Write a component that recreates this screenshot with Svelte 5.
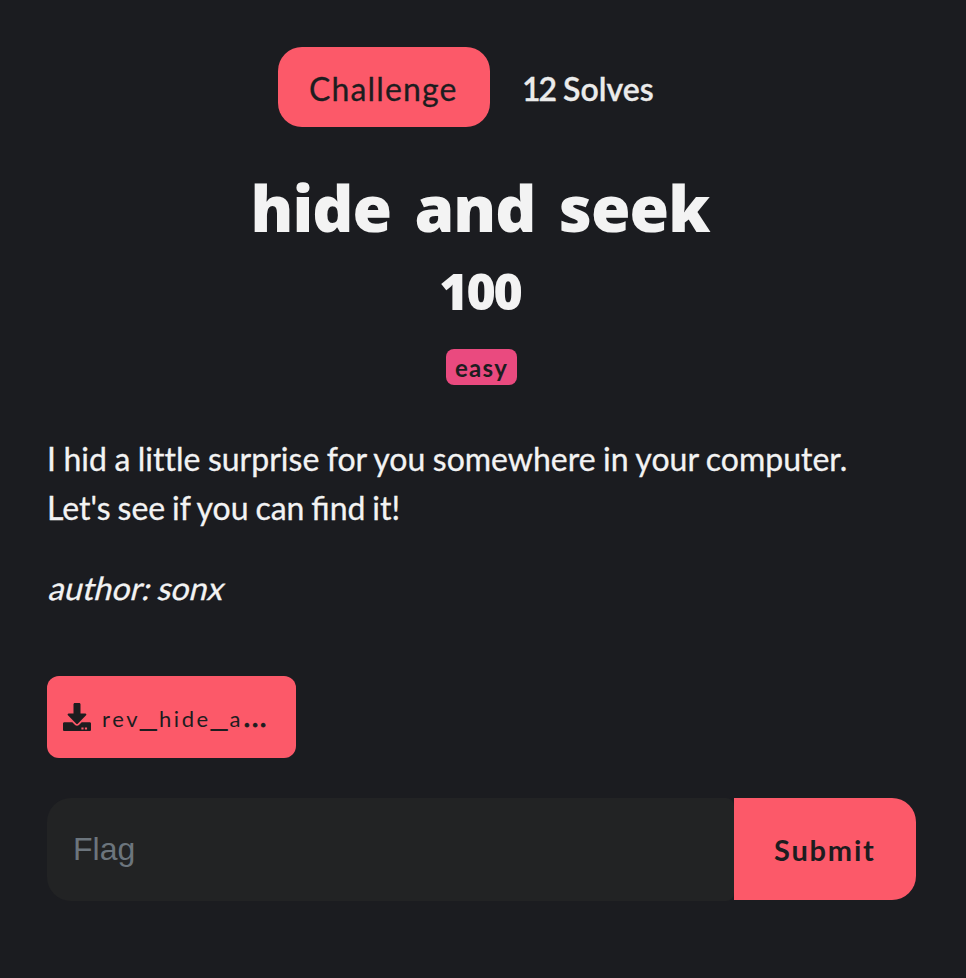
<script>
  let flag = $state('');
</script>

<main>
  <nav>
    <button class="tab active"><span>Challenge</span></button>
    <button class="tab solves"><span class="count">12</span> <span>Solves</span></button>
  </nav>

  <h2>hide and seek</h2>
  <h3>100</h3>
  <div class="tags"><span class="tag">easy</span></div>

  <section class="description">
    <p><span class="lead">I hid a <span class="plain">little</span> surprise for you somewhere in your computer.</span><br />Let's see if you can find it!</p>
    <p class="author"><span>author: sonx</span></p>
  </section>

  <button class="file">
    <svg viewBox="0 0 512 512" aria-hidden="true">
      <path fill-rule="evenodd" d="M216 0h80c13.3 0 24 10.7 24 24v168h87.7c17.8 0 26.7 21.5 14.1 34.1L269.7 378.3c-7.5 7.5-19.8 7.5-27.3 0L90.1 226.1c-12.6-12.6-3.7-34.1 14.1-34.1H192V24c0-13.3 10.7-24 24-24zm296 376v112c0 13.3-10.7 24-24 24H24c-13.3 0-24-10.7-24-24V376c0-13.3 10.7-24 24-24h146.7l49 49c20.1 20.1 52.5 20.1 72.6 0l49-49H488c13.3 0 24 10.7 24 24zM336 448v36h40v-36zm64 0v36h40v-36z" />
    </svg>
    <span class="name">rev<i>_</i>hide<i>_</i>a<b>...</b></span>
  </button>

  <form onsubmit={(e) => e.preventDefault()}>
    <input placeholder="Flag" bind:value={flag} />
    <button class="submit">Submit</button>
  </form>
</main>

<style>
  :global(body) {
    background: #1b1c20;
  }
  main {
    box-sizing: border-box;
    width: 966px;
    height: 978px;
    padding: 47px 50px 0 47px;
    overflow: hidden;
    background: #1b1c20;
    color: #f3f3f3;
    font-family: Lato, sans-serif;
    display: flex;
    flex-direction: column;
  }
  button {
    border: 0;
    padding: 0;
    margin: 0;
    font-family: Lato, sans-serif;
    color: #1d1d1f;
    background: #fc5969;
    white-space: nowrap;
    text-align: left;
  }
  nav {
    display: flex;
    height: 80px;
    padding-left: 231px;
  }
  .tab {
    box-sizing: border-box;
    height: 80px;
    padding-top: 3px;
    font-size: 32px;
    line-height: 75px;
  }
  .active {
    width: 212px;
    padding-left: 31px;
    border-radius: 24px;
    letter-spacing: 1.15px;
    -webkit-text-stroke: 0.3px #1d1d1f;
  }
  .solves {
    padding-left: 32px;
    background: none;
    color: #ebebeb;
    font-weight: 600;
    -webkit-text-stroke: 0.3px #ebebeb;
  }
  .count {
    letter-spacing: -2px;
  }
  h2,
  h3 {
    margin: 0;
    text-align: center;
    white-space: nowrap;
    font-family: 'Open Sans', sans-serif;
    font-weight: 800;
  }
  h2 {
    margin-top: 42px;
    padding-right: 3px;
    font-size: 64px;
    line-height: 77px;
    letter-spacing: -0.9px;
    word-spacing: 7.4px;
  }
  h3 {
    margin-top: 15px;
    padding-right: 3px;
    font-size: 50px;
    line-height: 60px;
    letter-spacing: -2.2px;
  }
  .tags {
    display: flex;
    justify-content: center;
    margin-top: 28px;
  }
  .tag {
    box-sizing: border-box;
    width: 71px;
    height: 36px;
    padding: 2px 0 0 9px;
    border-radius: 8px;
    background: #ea4a7f;
    color: #1d1d1f;
    font-size: 24px;
    font-weight: 700;
    line-height: 34px;
    letter-spacing: 1.3px;
  }
  .description {
    margin-top: 49px;
    font-size: 32px;
    line-height: 49px;
    word-spacing: -1.3px;
    -webkit-text-stroke: 0.3px #f3f3f3;
  }
  .lead {
    word-spacing: -0.7px;
  }
  .plain {
    font-variant-ligatures: none;
  }
  p {
    margin: 0;
    white-space: nowrap;
  }
  .author {
    margin-top: 31px;
    padding-left: 1px;
  }
  .author span {
    display: inline-block;
    transform: skewX(-14deg);
    transform-origin: 0 70%;
    letter-spacing: 0.1px;
  }
  .file {
    display: flex;
    align-items: center;
    box-sizing: border-box;
    width: 249px;
    height: 82px;
    margin-top: 64px;
    padding-left: 16px;
    border-radius: 12px;
  }
  .file svg {
    width: 28px;
    height: 28px;
    fill: #1d1d1f;
  }
  .name {
    display: flex;
    align-items: baseline;
    margin-left: 11px;
    padding-top: 2px;
    font-size: 22px;
    line-height: 26px;
    letter-spacing: 2.6px;
  }
  .name i {
    width: 18.8px;
    font: 30px/26px 'Liberation Sans', sans-serif;
    letter-spacing: 0;
    transform: translateY(-2px);
  }
  .name b {
    font-weight: 900;
    letter-spacing: 3px;
    -webkit-text-stroke: 1px #1d1d1f;
    padding-left: 1px;
  }
  form {
    display: flex;
    height: 103px;
    margin-top: 40px;
  }
  input {
    box-sizing: border-box;
    width: 687px;
    height: 103px;
    margin: 0;
    padding: 0 26px;
    border: 0;
    outline: 0;
    border-radius: 24px 8px 8px 24px;
    background: #222324;
    color: #f3f3f3;
    font: 32px 'Liberation Sans', sans-serif;
  }
  input::placeholder {
    color: #6c757d;
    opacity: 1;
  }
  .submit {
    box-sizing: border-box;
    width: 182px;
    height: 102px;
    padding: 1px 0 0 40px;
    border-radius: 0 24px 24px 0;
    font-size: 29px;
    font-weight: 700;
    letter-spacing: 1.8px;
  }
</style>
